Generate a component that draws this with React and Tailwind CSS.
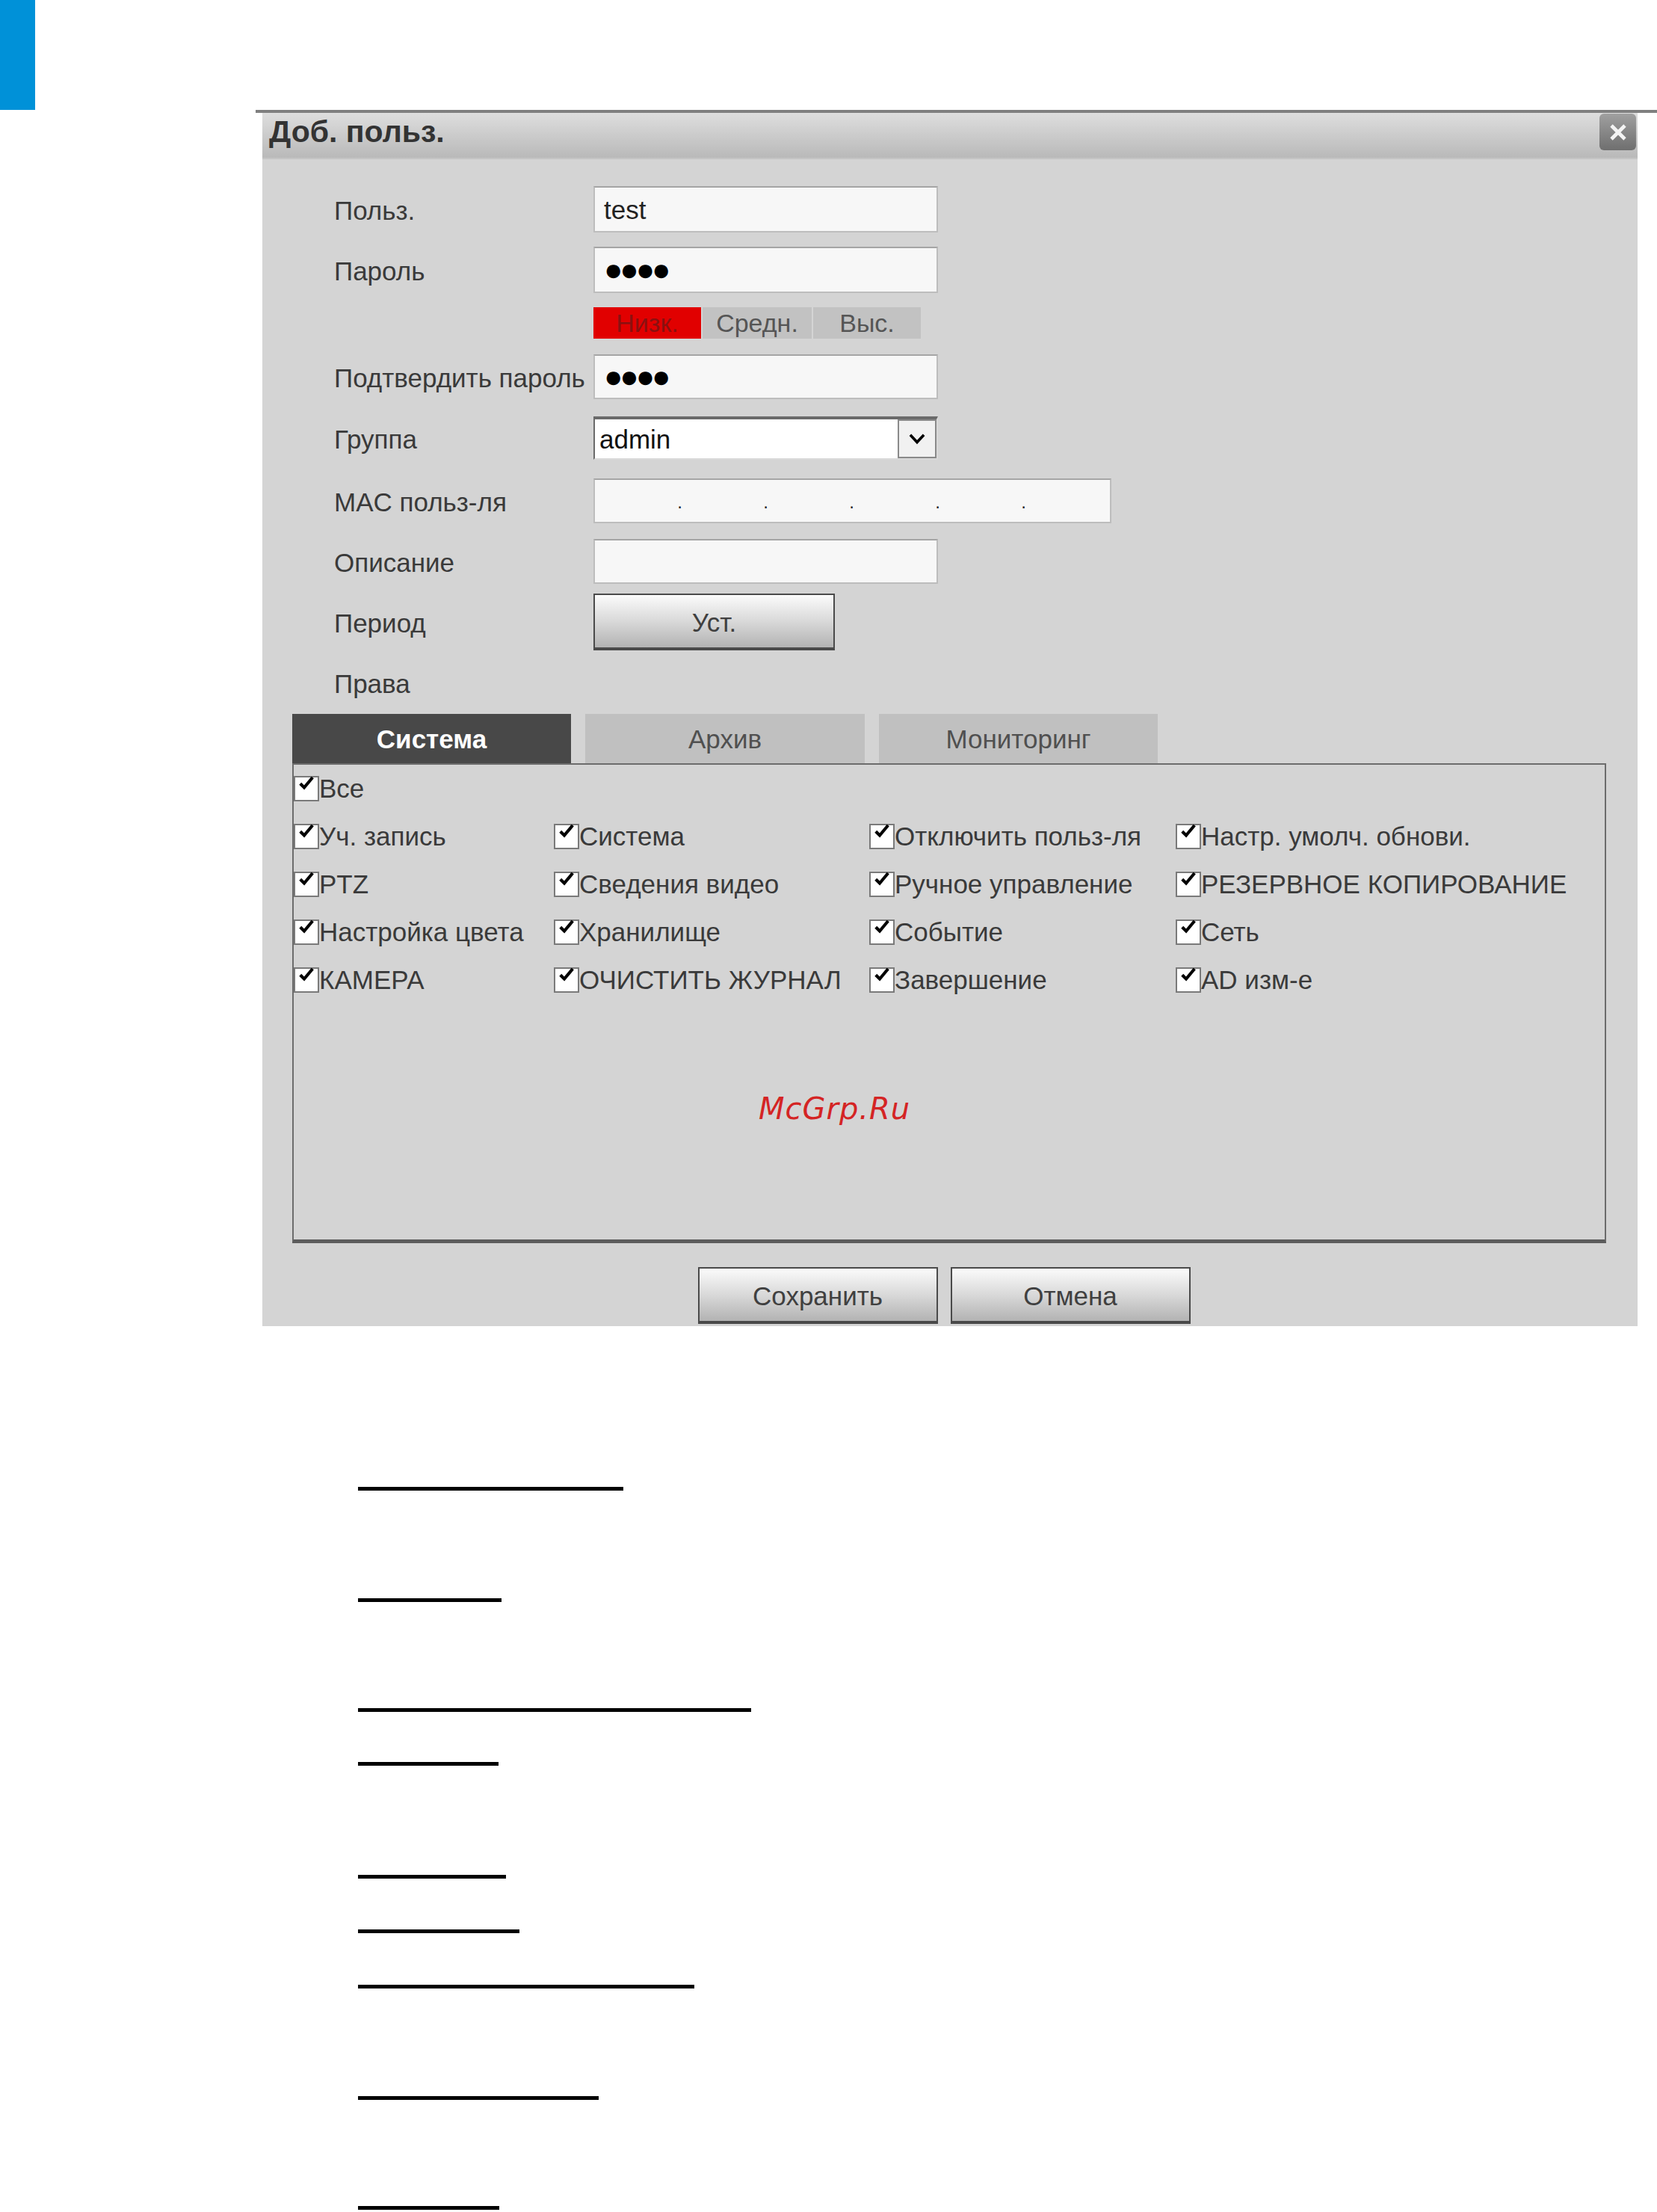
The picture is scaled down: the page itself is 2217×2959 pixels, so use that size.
const font = { fontFamily: '"Liberation Sans", Arial, sans-serif' };

const Check = () => (
  <span className="w-[34px] h-[34px] shrink-0 bg-white border-2 border-[#7a7a7a] flex items-start justify-center">
    <svg viewBox="0 0 16 16" className="w-[28px] h-[24px] -mt-[3px]">
      <path d="M2.5 7.5 L6 11 L13.5 2" fill="none" stroke="#000" strokeWidth="2.8" />
    </svg>
  </span>
);

const Perm = ({ label, w }) => (
  <div className={`flex items-center ${w}`}>
    <Check />
    <span className="whitespace-nowrap">{label}</span>
  </div>
);

const rows = [
  ['Уч. запись', 'Система', 'Отключить польз-ля', 'Настр. умолч. обнови.'],
  ['PTZ', 'Сведения видео', 'Ручное управление', 'РЕЗЕРВНОЕ КОПИРОВАНИЕ'],
  ['Настройка цвета', 'Хранилище', 'Событие', 'Сеть'],
  ['КАМЕРА', 'ОЧИСТИТЬ ЖУРНАЛ', 'Завершение', 'AD изм-е'],
];

const lines = [
  ['mt-[215px]', 'w-[355px]'],
  ['mt-[144px]', 'w-[192px]'],
  ['mt-[142px]', 'w-[526px]'],
  ['mt-[67px]', 'w-[188px]'],
  ['mt-[146px]', 'w-[198px]'],
  ['mt-[68px]', 'w-[216px]'],
  ['mt-[69px]', 'w-[450px]'],
  ['mt-[144px]', 'w-[322px]'],
  ['mt-[142px]', 'w-[189px]'],
];

const field = 'h-full bg-[#f7f7f7] border-2 border-[#bdbdbd] border-t-[#a5a5a5]';
const btn =
  'h-full flex items-center justify-center pt-[4px] border-2 border-[#4a4a4a] border-b-[4px] bg-gradient-to-b from-[#fbfbfb] via-[#d9d9d9] to-[#b3b3b3] text-[#404040] text-[35px]';

const Row = ({ label, mt, h, children }) => (
  <div className={`flex items-center ${mt} ${h}`}>
    <div className="w-[347px] shrink-0 whitespace-nowrap pt-[4px]">{label}</div>
    {children}
  </div>
);

const Dots = () => (
  <span className="text-black text-[42px] tracking-[-4px] leading-none">●●●●</span>
);

export default function App() {
  return (
    <div className="w-[2217px] h-[2959px] bg-white overflow-hidden text-[#3a3a3a]" style={font}>
      <div className="h-[147px]">
        <div className="w-[47px] h-full bg-[#0091d8]" />
      </div>
      <div className="ml-[342px] h-[4px] bg-[#808080]" />

      <div className="ml-[351px] w-[1840px] h-[1623px] bg-[#d4d4d4] flex flex-col text-[35px]">
        <div className="h-[62px] shrink-0 flex items-center justify-between bg-gradient-to-b from-[#dedede] to-[#b9b9b9] border-b-2 border-[#c4c4c4] pl-[9px] pr-[2px]">
          <span className="font-bold text-[41px] text-[#333] -mt-[8px]">Доб. польз.</span>
          <span className="w-[49px] h-[49px] rounded-[6px] bg-gradient-to-b from-[#a0a0a0] to-[#6f6f6f] flex items-center justify-center self-start mt-[1px]">
            <svg viewBox="0 0 20 20" className="w-[30px] h-[30px]">
              <path d="M4 4 L16 16 M16 4 L4 16" stroke="#f4f4f4" strokeWidth="3.2" />
            </svg>
          </span>
        </div>

        <div className="pl-[96px] flex flex-col">
          <Row label="Польз." mt="mt-[36px]" h="h-[62px]">
            <div className={`${field} w-[461px] flex items-center pl-[12px] pt-[3px] text-[#222]`}>test</div>
          </Row>
          <Row label="Пароль" mt="mt-[19px]" h="h-[62px]">
            <div className={`${field} w-[461px] flex items-center pl-[12px]`}>
              <Dots />
            </div>
          </Row>
          <Row label="" mt="mt-[19px]" h="h-[42px]">
            <div className="h-full flex gap-[2px] text-[34px]">
              <div className="w-[144px] bg-[#e10000] text-[#8a1010] flex items-center justify-center">Низк.</div>
              <div className="w-[146px] bg-[#c2c2c2] text-[#555] flex items-center justify-center">Средн.</div>
              <div className="w-[144px] bg-[#c2c2c2] text-[#555] flex items-center justify-center">Выс.</div>
            </div>
          </Row>
          <Row label="Подтвердить пароль" mt="mt-[21px]" h="h-[60px]">
            <div className={`${field} w-[461px] flex items-center pl-[12px]`}>
              <Dots />
            </div>
          </Row>
          <Row label="Группа" mt="mt-[23px]" h="h-[58px]">
            <div className="h-full w-[461px] flex bg-white border-t-[4px] border-l-2 border-[#6a6a6a] border-r-2 border-r-[#d9d9d9] border-b-2 border-b-[#d9d9d9]">
              <div className="flex-1 flex items-center pl-[6px] pt-[3px] text-[#111]">admin</div>
              <div className="w-[52px] bg-[#f1f1f1] border-2 border-[#8a8a8a] flex items-center justify-center">
                <svg viewBox="0 0 20 20" className="w-[32px] h-[26px]">
                  <path d="M3 6 L10 13.5 L17 6" fill="none" stroke="#000" strokeWidth="2.8" />
                </svg>
              </div>
            </div>
          </Row>
          <Row label="MAC польз-ля" mt="mt-[25px]" h="h-[60px]">
            <div className={`${field} w-[693px] flex items-end pb-[8px] text-[#222] text-[24px]`}>
              <span className="w-[117px] text-right">.</span>
              <span className="w-[115px] text-right">.</span>
              <span className="w-[115px] text-right">.</span>
              <span className="w-[115px] text-right">.</span>
              <span className="w-[115px] text-right">.</span>
            </div>
          </Row>
          <Row label="Описание" mt="mt-[21px]" h="h-[60px]">
            <div className={`${field} w-[461px]`} />
          </Row>
          <Row label="Период" mt="mt-[13px]" h="h-[76px]">
            <div className={`${btn} w-[323px]`}>Уст.</div>
          </Row>
          <Row label="Права" mt="mt-[23px]" h="h-[40px]" />
        </div>

        <div className="ml-[40px] mr-[42px] mt-[22px]">
          <div className="flex gap-[19px] h-[66px]">
            <div className="w-[373px] bg-[#484848] text-white font-bold flex items-center justify-center pt-[2px]">Система</div>
            <div className="w-[374px] bg-[#c0c0c0] text-[#505050] flex items-center justify-center pt-[2px]">Архив</div>
            <div className="w-[373px] bg-[#c0c0c0] text-[#505050] flex items-center justify-center pt-[2px]">Мониторинг</div>
          </div>
          <div className="h-[642px] border-2 border-[#6c6c6c] border-b-[5px] border-b-[#5c5c5c] flex flex-col">
            <div className="h-[64px] flex items-center">
              <Perm label="Все" />
            </div>
            {rows.map((r, i) => (
              <div key={i} className="h-[64px] flex items-center">
                <Perm label={r[0]} w="w-[348px]" />
                <Perm label={r[1]} w="w-[422px]" />
                <Perm label={r[2]} w="w-[410px]" />
                <Perm label={r[3]} />
              </div>
            ))}
            <div
              className="mt-[110px] pl-[622px] italic text-[#d42424] text-[40px] tracking-[1px]"
              style={{ fontFamily: '"DejaVu Sans", sans-serif' }}
            >
              McGrp.Ru
            </div>
          </div>
        </div>

        <div className="mt-[32px] h-[76px] flex justify-center gap-[17px] pr-[16px]">
          <div className={`${btn} w-[321px]`}>Сохранить</div>
          <div className={`${btn} w-[321px]`}>Отмена</div>
        </div>
      </div>

      <div className="pl-[479px] flex flex-col">
        {lines.map(([mt, w], i) => (
          <div key={i} className={`${mt} ${w} h-[5px] bg-black`} />
        ))}
      </div>
    </div>
  );
}
